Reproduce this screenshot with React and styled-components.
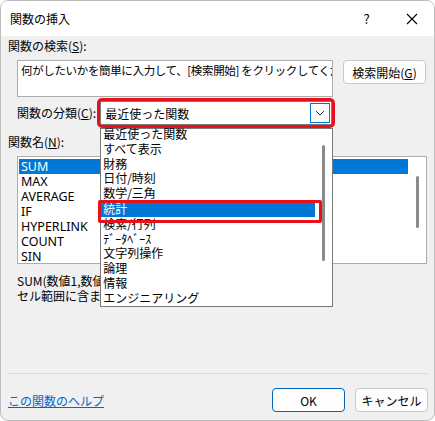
import React from "react";
import styled, { createGlobalStyle } from "styled-components";

const Global = createGlobalStyle`
  html, body { margin: 0; padding: 0; background: #fff; }
  body { font-family: "Noto Sans CJK JP", "Noto Sans", sans-serif; font-size: 12px; color: #000; }
`;

const categories = ["最近使った関数", "すべて表示", "財務", "日付/時刻", "数学/三角", "統計", "検索/行列", "ﾃﾞｰﾀﾍﾞｰｽ", "文字列操作", "論理", "情報", "エンジニアリング"];
const functions = ["SUM", "MAX", "AVERAGE", "IF", "HYPERLINK", "COUNT", "SIN"];

export default function App() {
  return (
    <>
      <Global />
      <Window>
        <TitleBar>
          <Title>関数の挿入</Title>
          <TitleBtn>?</TitleBtn>
          <TitleBtn>
            <svg width="12" height="12" viewBox="0 0 12 12"><path d="M1 1L11 11M11 1L1 11" stroke="#000" strokeWidth="1.1" /></svg>
          </TitleBtn>
        </TitleBar>
        <Body>
          <Label>関数の検索(<u>S</u>):</Label>
          <SearchRow>
            <SearchBox>何がしたいかを簡単に入力して、[検索開始] をクリックしてください。</SearchBox>
            <Button $w={83} $h={24}>検索開始(<u>G</u>)</Button>
          </SearchRow>
          <CategoryRow>
            <Label>関数の分類(<u>C</u>):</Label>
            <SelectWrap>
              <Select>
                <span>最近使った関数</span>
                <Arrow>
                  <svg width="10" height="6" viewBox="0 0 10 6"><path d="M1 1L5 5L9 1" stroke="#333" fill="none" /></svg>
                </Arrow>
              </Select>
              <Dropdown>
                <Items>
                  {categories.map((c) => (
                    <Item key={c} $sel={c === "統計"}>{c}</Item>
                  ))}
                </Items>
                <ScrollTrack><Thumb $top={16} $h={116} /></ScrollTrack>
                <Mark />
              </Dropdown>
            </SelectWrap>
          </CategoryRow>
          <Label>関数名(<u>N</u>):</Label>
          <ListBox>
            <ListItems>
              {functions.map((f, i) => (
                <ListItem key={f} $sel={i === 0}>{f}</ListItem>
              ))}
            </ListItems>
            <ScrollTrack $w={18}><Thumb $top={17} $h={52} /></ScrollTrack>
          </ListBox>
          <DescBlock>
            <div>SUM(数値1,数値2,...)</div>
            <div>セル範囲に含まれる数値をすべて合計します。</div>
          </DescBlock>
          <Spacer />
          <Separator />
          <Footer>
            <HelpLink>この関数のヘルプ</HelpLink>
            <Button $w={73} $h={24} $primary>OK</Button>
            <Button $w={73} $h={24}>キャンセル</Button>
          </Footer>
        </Body>
      </Window>
    </>
  );
}

const Window = styled.div`
  width: 433px;
  height: 419px;
  border: 1px solid #bdbdbd;
  border-radius: 8px;
  overflow: hidden;
  background: #f0f0f0;
  display: flex;
  flex-direction: column;
`;
const TitleBar = styled.div`
  height: 35px;
  background: #fff;
  display: flex;
  align-items: center;
  padding-left: 9px;
`;
const Title = styled.div`
  flex: 1;
  font-size: 12px;
`;
const TitleBtn = styled.div`
  width: 45px;
  height: 35px;
  display: flex;
  align-items: center;
  justify-content: center;
  font-size: 13px;
`;
const Body = styled.div`
  flex: 1;
  display: flex;
  flex-direction: column;
  padding: 0 6px 8px 7px;
  position: relative;
`;
const Label = styled.div`
  line-height: 20px;
  white-space: nowrap;
`;
const SearchRow = styled.div`
  display: flex;
  gap: 10px;
  margin: 4px 0 0 9px;
`;
const SearchBox = styled.div`
  width: 308px;
  height: 33px;
  background: #fff;
  border: 1px solid #adadad;
  padding: 1px 3px;
  line-height: 16px;
  font-size: 11.5px;
  letter-spacing: -0.35px;
  white-space: nowrap;
  overflow: hidden;
`;
const Button = styled.div`
  width: ${(p) => p.$w}px;
  height: ${(p) => p.$h}px;
  box-sizing: border-box;
  display: flex;
  align-items: center;
  justify-content: center;
  background: #fdfdfd;
  border: 1px solid ${(p) => (p.$primary ? "#0067c0" : "#c9c9c9")};
  border-radius: 4px;
  white-space: nowrap;
`;
const CategoryRow = styled.div`
  display: flex;
  align-items: center;
  gap: 4px;
  margin: 4px 0 7px 9px;
`;
const SelectWrap = styled.div`
  position: relative;
  outline: 3px solid #e8101a;
  border-radius: 2px;
`;
const Select = styled.div`
  width: 232px;
  height: 24px;
  box-sizing: border-box;
  background: #fff;
  border: 1px solid #7a7a7a;
  display: flex;
  align-items: center;
  padding-left: 4px;
  span { flex: 1; }
`;
const Arrow = styled.div`
  width: 20px;
  height: 20px;
  margin-right: 1px;
  border: 1px solid #0078d4;
  box-sizing: border-box;
  display: flex;
  align-items: center;
  justify-content: center;
`;
const Dropdown = styled.div`
  position: absolute;
  left: 0;
  top: 27px;
  width: 233px;
  height: 179px;
  box-sizing: border-box;
  background: #fff;
  border: 1px solid #7a7a7a;
  display: flex;
  z-index: 5;
`;
const Items = styled.div`
  flex: 1;
  margin-top: -2px;
`;
const Item = styled.div`
  height: 14.8px;
  line-height: 13px;
  padding-left: 2px;
  background: ${(p) => (p.$sel ? "#0078d7" : "transparent")};
  color: ${(p) => (p.$sel ? "#fff" : "#000")};
  margin-top: ${(p) => (p.$sel ? "1px" : "0")};
`;
const Mark = styled.div`
  position: absolute;
  left: -3px;
  top: 71px;
  width: 218px;
  height: 17px;
  border: 3px solid #e8101a;
  border-radius: 2px;
`;
const ScrollTrack = styled.div`
  width: ${(p) => p.$w || 17}px;
  position: relative;
`;
const Thumb = styled.div`
  position: absolute;
  left: 50%;
  margin-left: -1.5px;
  top: ${(p) => p.$top}px;
  width: 3px;
  height: ${(p) => p.$h}px;
  border-radius: 2px;
  background: #8a8a8a;
`;
const ListBox = styled.div`
  margin: 4px 0 0 9px;
  width: 410px;
  height: 108px;
  box-sizing: border-box;
  background: #fff;
  border: 1px solid #adadad;
  display: flex;
  padding: 2px 0 0 1px;
`;
const ListItems = styled.div`
  flex: 1;
`;
const ListItem = styled.div`
  height: 15px;
  line-height: 15px;
  padding-left: 2px;
  font-family: "Noto Sans", sans-serif;
  font-size: 12.5px;
  background: ${(p) => (p.$sel ? "#0078d7" : "transparent")};
  color: ${(p) => (p.$sel ? "#fff" : "#000")};
`;
const DescBlock = styled.div`
  margin: 9px 0 0 9px;
  line-height: 15px;
  display: flex;
  flex-direction: column;
  gap: 0;
`;
const Spacer = styled.div`
  flex: 1;
`;
const Separator = styled.div`
  height: 1px;
  background: #d9d9d9;
  margin: 0 0 14px 0;
`;
const Footer = styled.div`
  display: flex;
  align-items: center;
  gap: 10px;
`;
const HelpLink = styled.div`
  flex: 1;
  color: #0066cc;
  text-decoration: underline;
`;
